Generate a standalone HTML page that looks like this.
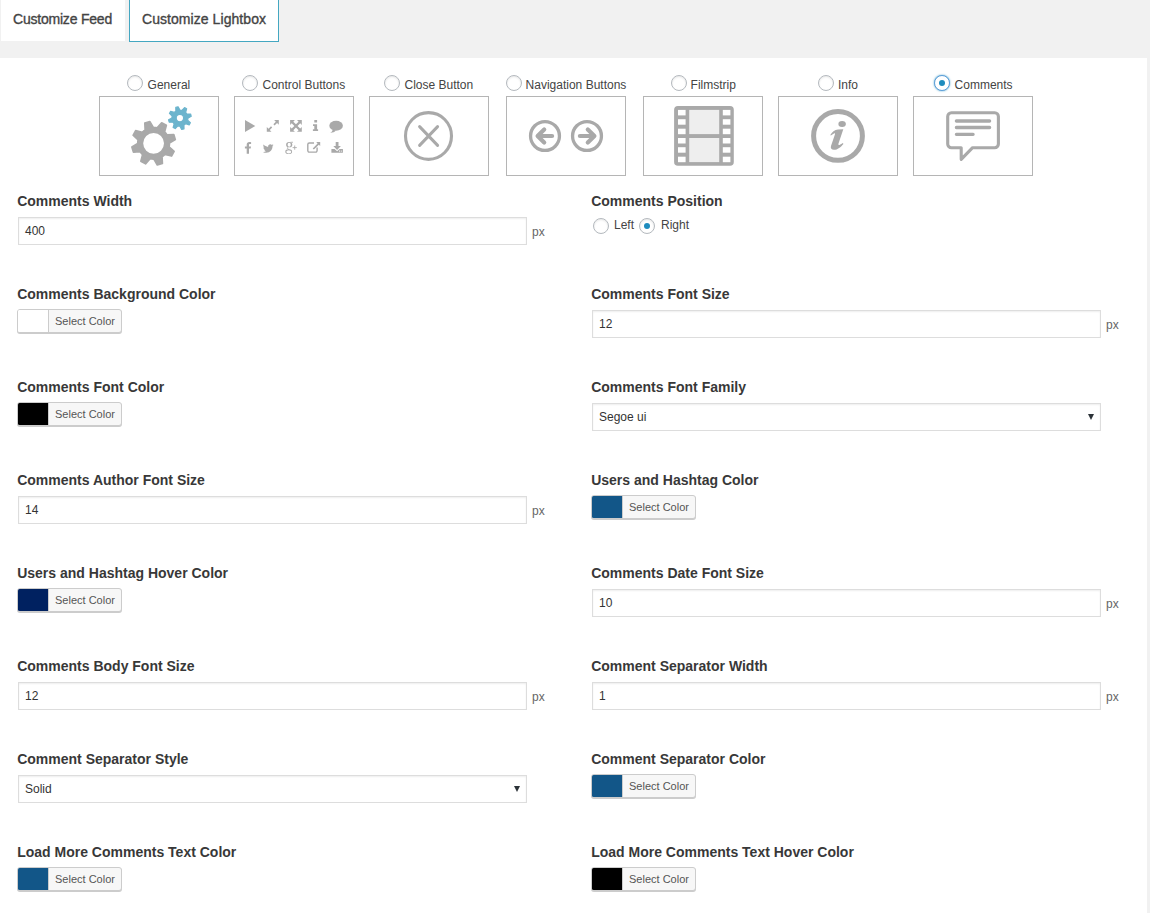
<!DOCTYPE html>
<html><head><meta charset="utf-8"><title>Customize Lightbox</title>
<style>
*{box-sizing:border-box}
html,body{margin:0;padding:0}
body{width:1150px;height:913px;overflow:hidden;background:#f1f1f1;font-family:"Liberation Sans",Arial,sans-serif;font-size:12px;color:#444;position:relative}
.tabs{position:absolute;left:0;top:0;height:58px;width:1150px}
.tab{position:absolute;top:0;background:#fff;font-size:14px;font-weight:normal;-webkit-text-stroke:0.35px #444;color:#444;line-height:16px;white-space:nowrap}
.tab span{position:absolute;top:11px}
#t1{left:1px;width:124px;height:41px}
#t1 span{left:12px;letter-spacing:-0.21px}
#t2{left:129px;width:150px;height:42px;border:1px solid #44a7c1;border-top:none}
#t2 span{left:12px;letter-spacing:0.06px}
.panel{position:absolute;left:0;top:58px;width:1147px;height:855px;background:#fff}
.sec{position:absolute;top:17px;height:102px}
.sec .lab{position:absolute;top:0;left:0;right:0;height:20px;text-align:center;white-space:nowrap;font-size:12px;color:#444}
.rad{display:inline-block;width:16px;height:16px;border:1px solid #b4b9be;border-radius:50%;background:#fff;box-shadow:inset 0 1px 2px rgba(0,0,0,.1);vertical-align:middle;position:relative}
.rad.on:after{content:"";position:absolute;left:4px;top:4px;width:6px;height:6px;border-radius:50%;background:#1e8cbe}
.rad.focus{border-color:#5b9dd9;box-shadow:0 0 2px rgba(30,140,190,.8)}
.box{position:absolute;top:38px;width:120px;height:80px;border:1px solid #b5b5b5;background:#fff}
.col{position:absolute;width:573.5px}
.fld{position:absolute;left:0;width:573.5px}
.fld .l{position:absolute;left:17.2px;top:0;font-size:14px;font-weight:bold;color:#383838;line-height:16px;white-space:nowrap}
.inp{position:absolute;left:18px;top:24px;width:509px;height:28px;border:1px solid #ddd;box-shadow:inset 0 1px 2px rgba(0,0,0,.07);background:#fff;font-size:12px;line-height:26px;padding-left:6px;color:#333}
.px{position:absolute;left:532px;top:32px;font-size:12px;color:#666;line-height:14px}
.sel:after{content:"";position:absolute;right:6px;top:10px;border:3.5px solid transparent;border-top:6px solid #2c3338;border-bottom:none}
.cp{position:absolute;left:17px;top:23px;width:105px;height:24px;border:1px solid #ccc;border-radius:3px;box-shadow:0 1px 0 #ccc;background:#f7f7f7}
.cp i{position:absolute;left:0;top:0;width:30px;height:22px;border-radius:1.5px 0 0 1.5px}
.cp b{position:absolute;left:30px;top:0;right:0;height:22px;border-left:1px solid #ccc;font-weight:normal;font-size:11px;line-height:22px;color:#555;text-align:center}
.abs{position:absolute}
.slab{position:absolute;top:20px;font-size:12px;line-height:14px;color:#444;white-space:nowrap}
.rl{position:absolute;top:25px;font-size:12px;line-height:14px;color:#444;white-space:nowrap}
.box svg{position:absolute;display:block}
</style></head><body>
<div class="tabs">
<div class="tab" id="t1"><span>Customize Feed</span></div>
<div class="tab" id="t2"><span>Customize Lightbox</span></div>
</div>
<div class="panel">
<div class="box" style="left:99px"><svg width="120" height="80" viewBox="0 0 120 80" style="left:-1px;top:-1px"><path d="M46.11,33.86L45.76,27.08 L50.93,25.54 L54.35,31.40A15.90,15.90 0 0 1 58.10,31.79L62.64,26.75 L67.39,29.32 L65.66,35.88A15.90,15.90 0 0 1 68.04,38.81L74.82,38.46 L76.36,43.63 L70.50,47.05A15.90,15.90 0 0 1 70.11,50.80L75.15,55.34 L72.58,60.09 L66.02,58.36A15.90,15.90 0 0 1 63.09,60.74L63.44,67.52 L58.27,69.06 L54.85,63.20A15.90,15.90 0 0 1 51.10,62.81L46.56,67.85 L41.81,65.28 L43.54,58.72A15.90,15.90 0 0 1 41.16,55.79L34.38,56.14 L32.84,50.97 L38.70,47.55A15.90,15.90 0 0 1 39.09,43.80L34.05,39.26 L36.62,34.51 L43.18,36.24A15.90,15.90 0 0 1 46.11,33.86ZM43.40,47.30 a11.20,11.20 0 1 0 22.40,0 a11.20,11.20 0 1 0 -22.40,0Z" fill="#a9a9a9" fill-rule="evenodd" stroke="#a9a9a9" stroke-width="1.6" stroke-linejoin="round"/><path d="M76.87,15.19L76.79,11.40 L79.11,10.78 L80.93,14.10A8.00,8.00 0 0 1 82.94,14.36L85.56,11.63 L87.64,12.83 L86.58,16.46A8.00,8.00 0 0 1 87.81,18.07L91.60,17.99 L92.22,20.31 L88.90,22.13A8.00,8.00 0 0 1 88.64,24.14L91.37,26.76 L90.17,28.84 L86.54,27.78A8.00,8.00 0 0 1 84.93,29.01L85.01,32.80 L82.69,33.42 L80.87,30.10A8.00,8.00 0 0 1 78.86,29.84L76.24,32.57 L74.16,31.37 L75.22,27.74A8.00,8.00 0 0 1 73.99,26.13L70.20,26.21 L69.58,23.89 L72.90,22.07A8.00,8.00 0 0 1 73.16,20.06L70.43,17.44 L71.63,15.36 L75.26,16.42A8.00,8.00 0 0 1 76.87,15.19ZM77.20,22.10 a3.70,3.70 0 1 0 7.40,0 a3.70,3.70 0 1 0 -7.40,0Z" fill="#6cb4cd" fill-rule="evenodd" stroke="#6cb4cd" stroke-width="1.2" stroke-linejoin="round"/></svg></div>
<span class="rad abs" style="left:127px;top:17px"></span><span class="slab" style="left:147.6px">General</span>
<div class="box" style="left:234px"><svg width="120" height="80" viewBox="0 0 120 80" style="left:-1px;top:-1px"><g fill="#a9a9a9"><path d="M11,24L21.3,30L11,36Z"/><path d="M40.1,24.1H44.8V28.8L43.05,27.05L40.6,29.5L39.4,28.3L41.85,25.85Z M32.8,35.7V31L34.55,32.75L37,30.3L38.2,31.5L35.75,33.95L37.5,35.7Z"/><path d="M56.1,24.1H60.9L59.3,25.7L61.95,28.35L64.6,25.7L63,24.1H67.8V28.9L66.2,27.3L63.55,29.95L66.2,32.6L67.8,31V35.8H63L64.6,34.2L61.95,31.55L59.3,34.2L60.9,35.8H56.1V31L57.7,32.6L60.35,29.95L57.7,27.3L56.1,28.9Z"/><path d="M80.3,24.1H83.1V26.6H80.3Z M79,28.3H83.1V33.3H84.1V35H78.9V33.3H80.3V30H79Z"/><ellipse cx="102.1" cy="29.8" rx="6.8" ry="5"/><path d="M98.6,33.5C98.6,35 97.6,36.3 96.2,36.9C98.8,36.9 100.8,35.9 101.9,34.6Z"/><path d="M12.7,57.8V52.5H10.9V50.5H12.7V48.8C12.7,47 13.8,46.1 15.3,46.1C16,46.1 16.7,46.15 17.1,46.2V48.1H16C15.2,48.1 15,48.5 15,49.1V50.5H17L16.7,52.5H15V57.8Z"/><path d="M39.6,49.2C39.2,49.4 38.8,49.5 38.35,49.55C38.8,49.3 39.15,48.85 39.3,48.35C38.9,48.6 38.4,48.8 37.9,48.9C37.5,48.45 36.9,48.2 36.3,48.2C35.1,48.2 34.1,49.2 34.1,50.4C34.1,50.6 34.1,50.75 34.15,50.9C32.3,50.8 30.7,49.9 29.6,48.6C29.4,48.9 29.3,49.3 29.3,49.7C29.3,50.5 29.7,51.1 30.3,51.5C29.9,51.5 29.6,51.4 29.3,51.2C29.3,52.3 30.05,53.2 31.05,53.4C30.75,53.5 30.4,53.5 30.05,53.45C30.35,54.3 31.15,54.95 32.1,54.95C31.2,55.65 30.1,56 28.9,55.9C29.9,56.5 31,56.8 32.2,56.8C36.3,56.8 38.5,53.5 38.5,50.6V50.3C38.9,50 39.3,49.6 39.6,49.2Z"/><path fill-rule="evenodd" d="M52.1,48.7a3.1,2.6 0 1 0 6.2,0a3.1,2.6 0 1 0 -6.2,0Z M53.6,48.7a1.6,2.0 0 1 0 3.2,0a1.6,2.0 0 1 0 -3.2,0Z M51.3,55.7a3.4,2.35 0 1 0 6.8,0a3.4,2.35 0 1 0 -6.8,0Z M52.3,55.8a2.5,1.6 0 1 0 5,0a2.5,1.6 0 1 0 -5,0Z"/><g fill="none" stroke="#a9a9a9"><path d="M56.5,46.25H59M54.2,51C52.6,52 53.2,53.2 55.3,53.5" stroke-width="0.8"/><path d="M58.6,51.6H62.8M60.7,49.5V53.7" stroke-width="0.85"/></g><path d="M80,47H75.3a1.5,1.5 0 0 0 -1.5,1.5V54.6a1.5,1.5 0 0 0 1.5,1.5H81.6a1.5,1.5 0 0 0 1.5,-1.5V51.5" fill="none" stroke="#a9a9a9" stroke-width="1.4"/><path d="M82.2,46.1H86.2V50.1L84.8,48.7L79.9,53.6L78.7,52.4L83.6,47.5Z"/><path d="M101.7,46.1H104.5V50H106.9L103.1,53.9L99.3,50H101.7Z M97.4,53.1H100.6L103.1,55.3L105.6,53.1H108.9V56.8H97.4Z"/><rect x="105" y="54.6" width="1" height="1" fill="#fff"/><rect x="106.8" y="54.6" width="1" height="1" fill="#fff"/></g></svg></div>
<span class="rad abs" style="left:242px;top:17px"></span><span class="slab" style="left:262.5px">Control Buttons</span>
<div class="box" style="left:369px"><svg width="120" height="80" viewBox="0 0 120 80" style="left:-1px;top:-1px"><ellipse cx="59.5" cy="40" rx="23" ry="23.35" fill="none" stroke="#a9a9a9" stroke-width="3.1"/><path d="M50.6,30.6L68.6,49.4M68.6,30.6L50.6,49.4" stroke="#a9a9a9" stroke-width="3.0" stroke-linecap="round" fill="none"/></svg></div>
<span class="rad abs" style="left:384px;top:17px"></span><span class="slab" style="left:404.5px">Close Button</span>
<div class="box" style="left:506px"><svg width="120" height="80" viewBox="0 0 120 80" style="left:-1px;top:-1px"><g fill="none" stroke="#a9a9a9"><circle cx="39" cy="40" r="14.45" stroke-width="3.3"/><circle cx="81" cy="40" r="14.45" stroke-width="3.3"/><path d="M46.1,40H32M38.2,33.4L31.6,40L38.2,46.6M73.9,40H88M81.8,33.4L88.4,40L81.8,46.6" stroke-width="4.2" stroke-linecap="round" stroke-linejoin="round"/></g></svg></div>
<span class="rad abs" style="left:506px;top:17px"></span><span class="slab" style="left:525.6px">Navigation Buttons</span>
<div class="box" style="left:643px"><svg width="120" height="80" viewBox="0 0 120 80" style="left:-1px;top:-1px"><rect x="31.1" y="10.1" width="59.7" height="59.6" rx="3.8" fill="#a9a9a9"/><rect x="46.2" y="13.9" width="30" height="24.2" fill="#eee"/><rect x="46.2" y="42" width="30" height="24.1" fill="#eee"/><rect x="35" y="13.9" width="7.6" height="5.5" fill="#fff"/><rect x="79.8" y="13.9" width="7.6" height="5.5" fill="#fff"/><rect x="35" y="23.2" width="7.6" height="5.5" fill="#fff"/><rect x="79.8" y="23.2" width="7.6" height="5.5" fill="#fff"/><rect x="35" y="32.7" width="7.6" height="5.5" fill="#fff"/><rect x="79.8" y="32.7" width="7.6" height="5.5" fill="#fff"/><rect x="35" y="42.0" width="7.6" height="5.5" fill="#fff"/><rect x="79.8" y="42.0" width="7.6" height="5.5" fill="#fff"/><rect x="35" y="51.2" width="7.6" height="5.5" fill="#fff"/><rect x="79.8" y="51.2" width="7.6" height="5.5" fill="#fff"/><rect x="35" y="60.7" width="7.6" height="5.5" fill="#fff"/><rect x="79.8" y="60.7" width="7.6" height="5.5" fill="#fff"/></svg></div>
<span class="rad abs" style="left:671px;top:17px"></span><span class="slab" style="left:690.6px">Filmstrip</span>
<div class="box" style="left:778px"><svg width="120" height="80" viewBox="0 0 120 80" style="left:-1px;top:-1px"><circle cx="60" cy="39.9" r="24.4" fill="none" stroke="#a9a9a9" stroke-width="5"/><ellipse cx="64.1" cy="28" rx="3.75" ry="3.0" fill="#a9a9a9"/><path d="M52.3,38.9C54,36.2 56.6,33.7 60,33.5L65.3,33.2L60.5,47.4C60.2,48.5 60.6,49.1 61.5,48.9C62.6,48.5 63.8,47.8 64.9,47.1L65.4,47.9C63,50.8 59.5,53.8 56,53.8C53.5,53.8 52.3,52.2 53,50L56.9,38.6C57.2,37.5 56.8,37.1 56,37.4C54.9,37.8 53.8,38.7 52.9,39.5Z" fill="#a9a9a9"/></svg></div>
<span class="rad abs" style="left:818px;top:17px"></span><span class="slab" style="left:838px">Info</span>
<div class="box" style="left:913px"><svg width="120" height="80" viewBox="0 0 120 80" style="left:-1px;top:-1px"><g fill="none" stroke="#a9a9a9" stroke-linejoin="round" stroke-linecap="round"><path d="M48.2,51.7H38.4a3.7,3.7 0 0 1 -3.7,-3.7V20.4a3.7,3.7 0 0 1 3.7,-3.7H81.7a3.7,3.7 0 0 1 3.7,3.7V48a3.7,3.7 0 0 1 -3.7,3.7H59.6L48.2,63.3Z" stroke-width="3.1"/><path d="M43.4,25H76.6M43.4,31.5H76.6M43.4,38.3H60.1" stroke-width="3.3"/></g></svg></div>
<span class="rad abs on focus" style="left:934px;top:17px"></span><span class="slab" style="left:954.6px">Comments</span>

<div class="fld" style="left:0px;top:135px"><div class="l">Comments Width</div><div class="inp">400</div><div class="px">px</div></div>
<div class="fld" style="left:0px;top:228px"><div class="l">Comments Background Color</div><div class="cp"><i style="background:#ffffff"></i><b>Select Color</b></div></div>
<div class="fld" style="left:0px;top:321px"><div class="l">Comments Font Color</div><div class="cp"><i style="background:#000000"></i><b>Select Color</b></div></div>
<div class="fld" style="left:0px;top:414px"><div class="l">Comments Author Font Size</div><div class="inp">14</div><div class="px">px</div></div>
<div class="fld" style="left:0px;top:507px"><div class="l">Users and Hashtag Hover Color</div><div class="cp"><i style="background:#002160"></i><b>Select Color</b></div></div>
<div class="fld" style="left:0px;top:600px"><div class="l">Comments Body Font Size</div><div class="inp">12</div><div class="px">px</div></div>
<div class="fld" style="left:0px;top:693px"><div class="l">Comment Separator Style</div><div class="inp sel">Solid</div></div>
<div class="fld" style="left:0px;top:786px"><div class="l">Load More Comments Text Color</div><div class="cp"><i style="background:#125688"></i><b>Select Color</b></div></div>
<div class="fld" style="left:574px;top:135px"><div class="l">Comments Position</div><span class="rad abs" style="left:19px;top:25px"></span><span class="rl" style="left:40px">Left</span><span class="rad abs on" style="left:65px;top:25px"></span><span class="rl" style="left:87px">Right</span></div>
<div class="fld" style="left:574px;top:228px"><div class="l">Comments Font Size</div><div class="inp">12</div><div class="px">px</div></div>
<div class="fld" style="left:574px;top:321px"><div class="l">Comments Font Family</div><div class="inp sel">Segoe ui</div></div>
<div class="fld" style="left:574px;top:414px"><div class="l">Users and Hashtag Color</div><div class="cp"><i style="background:#125688"></i><b>Select Color</b></div></div>
<div class="fld" style="left:574px;top:507px"><div class="l">Comments Date Font Size</div><div class="inp">10</div><div class="px">px</div></div>
<div class="fld" style="left:574px;top:600px"><div class="l">Comment Separator Width</div><div class="inp">1</div><div class="px">px</div></div>
<div class="fld" style="left:574px;top:693px"><div class="l">Comment Separator Color</div><div class="cp"><i style="background:#125688"></i><b>Select Color</b></div></div>
<div class="fld" style="left:574px;top:786px"><div class="l">Load More Comments Text Hover Color</div><div class="cp"><i style="background:#000000"></i><b>Select Color</b></div></div>

</div>
</body></html>
